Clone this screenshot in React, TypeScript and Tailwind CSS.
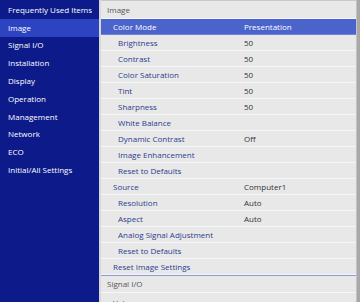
import React from "react";

const leftItems = [
  "Frequently Used Items",
  "Image",
  "Signal I/O",
  "Installation",
  "Display",
  "Operation",
  "Management",
  "Network",
  "ECO",
  "Initial/All Settings",
];

type Row = { label: string; value?: string; level: 1 | 2; selected?: boolean };

const rows: Row[] = [
  { label: "Color Mode", value: "Presentation", level: 1, selected: true },
  { label: "Brightness", value: "50", level: 2 },
  { label: "Contrast", value: "50", level: 2 },
  { label: "Color Saturation", value: "50", level: 2 },
  { label: "Tint", value: "50", level: 2 },
  { label: "Sharpness", value: "50", level: 2 },
  { label: "White Balance", level: 2 },
  { label: "Dynamic Contrast", value: "Off", level: 2 },
  { label: "Image Enhancement", level: 2 },
  { label: "Reset to Defaults", level: 2 },
  { label: "Source", value: "Computer1", level: 1 },
  { label: "Resolution", value: "Auto", level: 2 },
  { label: "Aspect", value: "Auto", level: 2 },
  { label: "Analog Signal Adjustment", level: 2 },
  { label: "Reset to Defaults", level: 2 },
  { label: "Reset Image Settings", level: 1 },
];

export default function App() {
  return (
    <div
      className="w-[360px] h-[302px] overflow-hidden flex bg-[#d4d4d4] text-[8px]"
      style={{ fontFamily: '"Open Sans", "Noto Sans", sans-serif' }}
    >
      <div className="w-[99px] h-full bg-[#0c1a8a] pt-[1px] shrink-0">
        {leftItems.map((it) => (
          <div
            key={it}
            className={`h-[17.8px] flex items-center pl-[8px] text-white font-medium ${
              it === "Image" ? "bg-[#2c44c2]" : ""
            }`}
          >
            {it}
          </div>
        ))}
      </div>
      <div className="w-[2px] h-full bg-[#d8d8d8]" />
      <div className="flex-1 h-full flex bg-[#e8e8e8] font-medium">
        <div className="flex-1 flex flex-col">
          <div className="h-[19px] flex items-center pl-[6px] text-[#555] border-b border-[#f6f6f6] border-t border-t-[#c8c8c8] shrink-0">
            Image
          </div>
          {rows.map((r, i) => (
            <div
              key={i}
              className={`h-[16px] shrink-0 flex items-center border-b ${
                r.selected
                  ? "bg-[#4a64cc] text-white border-[#6f86d8]"
                  : "border-[#f6f6f6] text-[#2b3c8e]"
              }`}
            >
              <div className={`w-[143px] ${r.level === 1 ? "pl-[12px]" : "pl-[17px]"}`}>
                {r.label}
              </div>
              <div className={r.selected ? "text-white" : "text-[#333]"}>{r.value}</div>
            </div>
          ))}
          <div className="h-[1px] bg-[#8d9ad6] shrink-0" />
          <div className="h-[17px] flex items-center pl-[6px] text-[#555] border-b border-[#f6f6f6] shrink-0">
            Signal I/O
          </div>
          <div className="h-[16px] flex items-start pt-[6px] pl-[12px] text-[#555] shrink-0 leading-none">
            Volume
          </div>
        </div>
        <div className="w-[4px] h-full bg-[#a8a8a8] border-l border-[#c4c4c4]" />
      </div>
    </div>
  );
}
